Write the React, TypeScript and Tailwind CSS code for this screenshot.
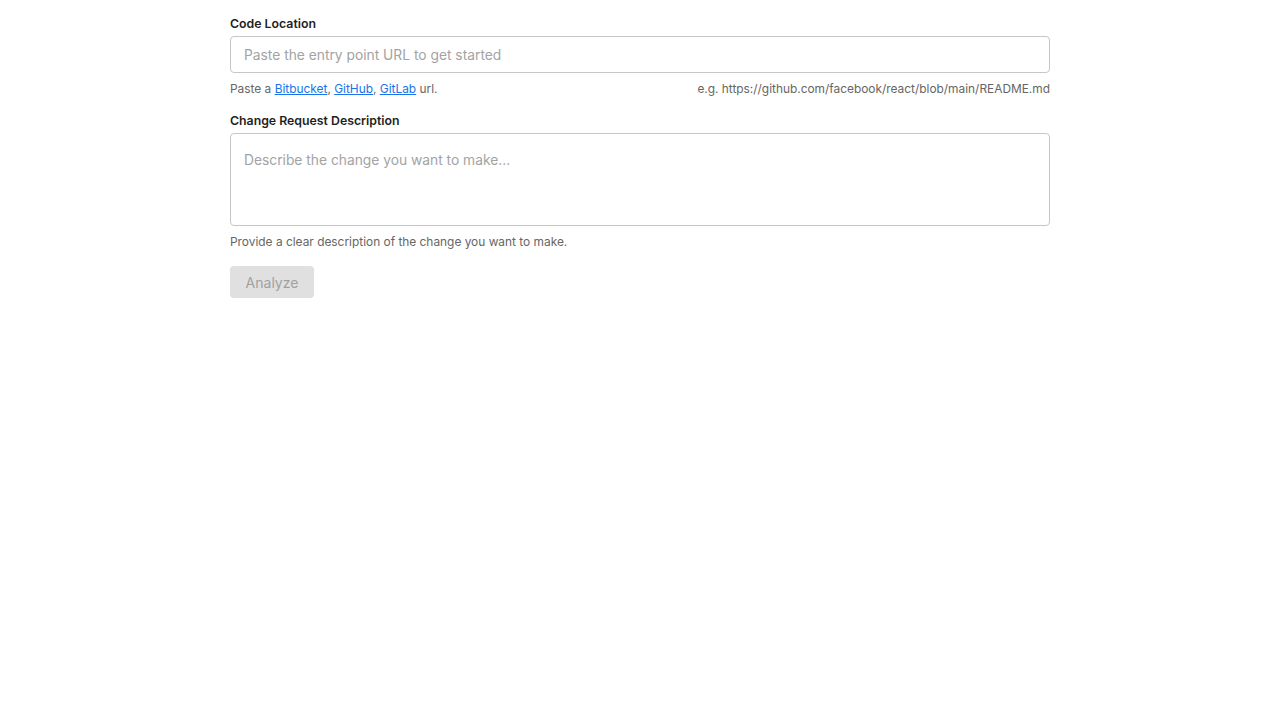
import { useState } from 'react';

export default function App() {
  const [url, setUrl] = useState('');
  const [description, setDescription] = useState('');
  const canAnalyze = url.trim() !== '' && description.trim() !== '';

  return (
    <div
      className="min-h-screen bg-white text-[#1f1f1f]"
      style={{ fontFamily: 'Inter, "Noto Sans", sans-serif' }}
    >
      <div className="w-[820px] mx-auto pt-4">
        <label className="block text-[12.3px] leading-4 font-semibold text-[#1f1f1f]">
          Code Location
        </label>
        <input
          type="text"
          value={url}
          onChange={(e) => setUrl(e.target.value)}
          placeholder="Paste the entry point URL to get started"
          className="mt-1 block w-full h-[37px] px-[13px] rounded-[4px] border border-[#c6c6c6] text-[13.8px] text-[#1f1f1f] placeholder:text-[#a3a3a3] outline-none focus:border-[#1a73e8]"
        />
        <div className="mt-2 flex items-center justify-between text-[11.9px] leading-4 text-[#666]">
          <span>
            Paste a{' '}
            <a href="#" className="text-[#1a73e8] underline">Bitbucket</a>,{' '}
            <a href="#" className="text-[#1a73e8] underline">GitHub</a>,{' '}
            <a href="#" className="text-[#1a73e8] underline">GitLab</a> url.
          </span>
          <span>e.g. https://github.com/facebook/react/blob/main/README.md</span>
        </div>

        <label className="mt-4 block text-[12.3px] leading-4 font-semibold text-[#1f1f1f]">
          Change Request Description
        </label>
        <textarea
          value={description}
          onChange={(e) => setDescription(e.target.value)}
          placeholder="Describe the change you want to make..."
          className="mt-1 block w-full h-[93px] px-[13px] py-[17px] leading-[18px] rounded-[4px] border border-[#c6c6c6] text-[13.8px] text-[#1f1f1f] placeholder:text-[#a3a3a3] outline-none resize-none focus:border-[#1a73e8]"
        />
        <p className="mt-2 text-[11.9px] leading-4 text-[#666]">
          Provide a clear description of the change you want to make.
        </p>

        <button
          type="button"
          disabled={!canAnalyze}
          className="mt-4 h-[32px] w-[84px] rounded-[4px] bg-[#e0e0e0] text-[14px] text-[#a0a0a0] disabled:cursor-not-allowed"
        >
          Analyze
        </button>
      </div>
    </div>
  );
}
